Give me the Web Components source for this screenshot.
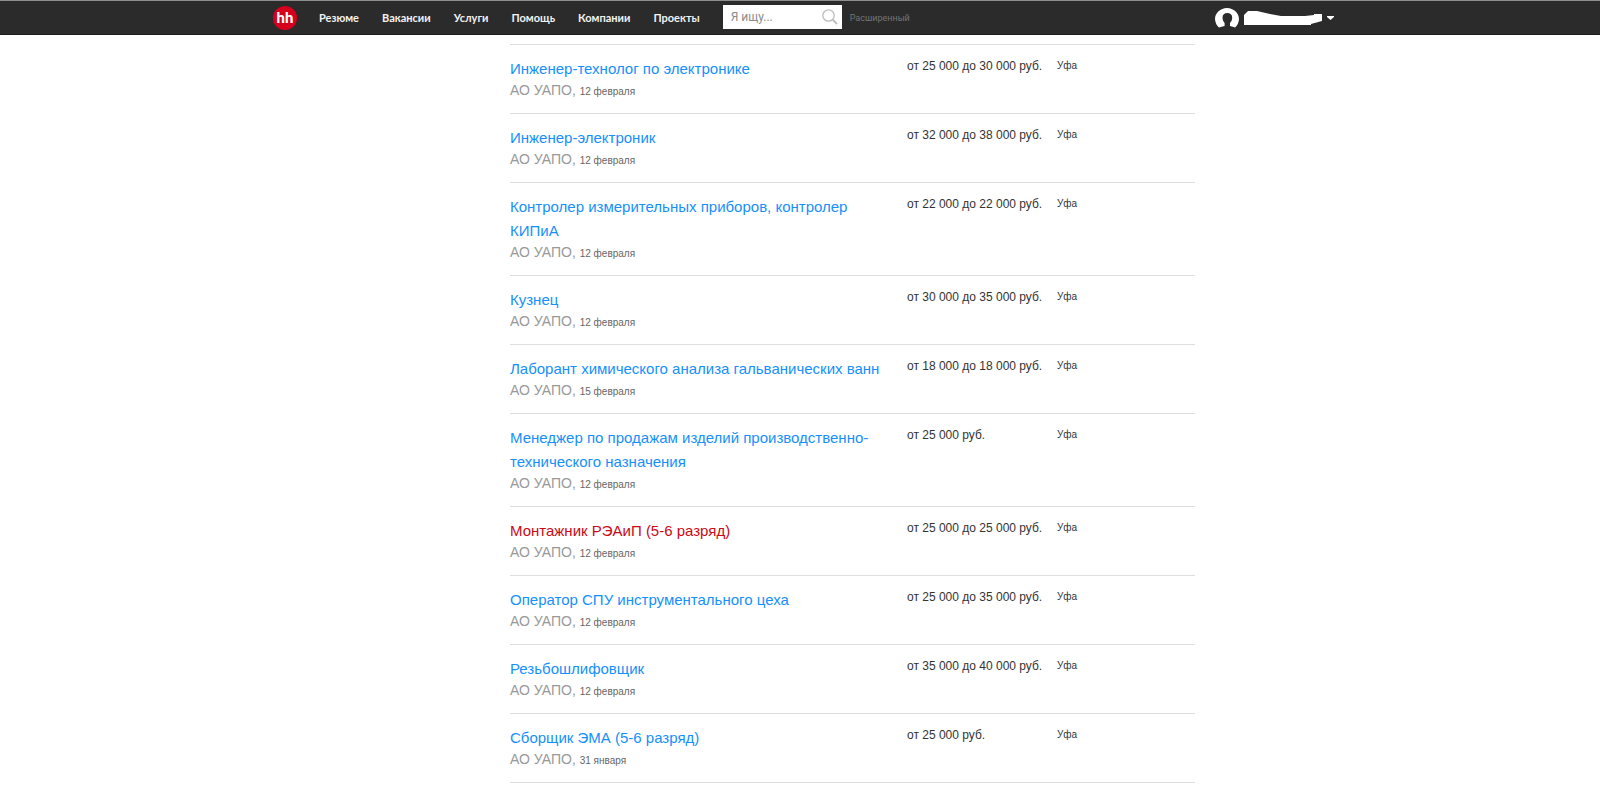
<!DOCTYPE html>
<html lang="ru">
<head>
<meta charset="utf-8">
<title>Вакансии</title>
<style>
body { margin: 0; background: #fff; font-family: "Liberation Sans", Arial, sans-serif; }
</style>
</head>
<body>
<hh-header></hh-header>
<vacancy-list>
  <vacancy-row salary="от 25 000 до 30 000 руб." date="12 февраля">Инженер-технолог по электронике</vacancy-row>
  <vacancy-row salary="от 32 000 до 38 000 руб." date="12 февраля">Инженер-электроник</vacancy-row>
  <vacancy-row salary="от 22 000 до 22 000 руб." date="12 февраля">Контролер измерительных приборов, контролер КИПиА</vacancy-row>
  <vacancy-row salary="от 30 000 до 35 000 руб." date="12 февраля">Кузнец</vacancy-row>
  <vacancy-row salary="от 18 000 до 18 000 руб." date="15 февраля">Лаборант химического анализа гальванических ванн</vacancy-row>
  <vacancy-row salary="от 25 000 руб." date="12 февраля">Менеджер по продажам изделий производственно-технического назначения</vacancy-row>
  <vacancy-row salary="от 25 000 до 25 000 руб." date="12 февраля" active>Монтажник РЭАиП (5-6 разряд)</vacancy-row>
  <vacancy-row salary="от 25 000 до 35 000 руб." date="12 февраля">Оператор СПУ инструментального цеха</vacancy-row>
  <vacancy-row salary="от 35 000 до 40 000 руб." date="12 февраля">Резьбошлифовщик</vacancy-row>
  <vacancy-row salary="от 25 000 руб." date="31 января">Сборщик ЭМА (5-6 разряд)</vacancy-row>
</vacancy-list>

<template id="header-tpl">
<style>
:host { display: block; box-sizing: border-box; height: 35px; background: #2b2b2b; border-top: 1px solid #8d8f8f; border-bottom: 1px solid #1c1c1c; font-family: Roboto, sans-serif; }
.bar { display: flex; align-items: center; box-sizing: border-box; height: 33px; max-width: 1068px; margin: 0 auto; padding-left: 7px; }
a { color: inherit; text-decoration: none; }
.logo { display: flex; align-items: center; justify-content: center; width: 24px; height: 24px; border-radius: 50%; background: #d6001c; color: #fff; font: bold 15px/24px Roboto, sans-serif; }
nav { display: flex; gap: 23px; margin-left: 22px; color: #f2f2f2; font: bold 11px/16px Lato, Roboto, sans-serif; }
form { display: flex; align-items: center; gap: 8px; margin-left: 23px; }
.search { display: flex; align-items: center; width: 119px; height: 24px; margin-bottom: 2px; background: #fff; }
input { flex: 1; min-width: 0; border: 0; outline: 0; padding: 0 0 0 8px; background: none; font: 12px/24px Roboto, sans-serif; }
input::placeholder { color: #8c8c8c; opacity: 1; }
button { border: 0; padding: 0; background: none; color: inherit; display: flex; align-items: center; }
.search button { width: 20px; height: 24px; }
.more { color: #747474; font-size: 9px; line-height: 16px; }
.user { margin-left: auto; gap: 5px; }
svg { display: block; }
</style>
<header class="bar">
  <a class="logo" href="#" aria-label="HeadHunter">hh</a>
  <nav><a href="#">Резюме</a><a href="#">Вакансии</a><a href="#">Услуги</a><a href="#">Помощь</a><a href="#">Компании</a><a href="#">Проекты</a></nav>
  <form>
    <div class="search">
      <input type="text" placeholder="Я ищу..." aria-label="Я ищу">
      <button type="button" aria-label="Найти"><svg width="16" height="16" viewBox="0 0 16 16" fill="none" stroke="#bdbdbd"><circle cx="6.5" cy="6.5" r="5.7" stroke-width="1.3"/><path d="M10.5 10.5 15 15" stroke-width="1.8"/></svg></button>
    </div>
    <a class="more" href="#">Расширенный</a>
  </form>
  <button class="user" type="button" aria-label="Профиль">
    <svg width="24" height="20" viewBox="0 0 24 20"><path fill="#fff" d="M4 19.500A12 12 0 0 1 0 11C0 5 5.400 0 12 0s12 5 12 11a12 12 0 0 1-4 8.500q-2-1-5-1.500v-3c1.500-1.500 2.200-3.500 2.200-5.500C17.200 6.500 15.200 5 12.300 5S7.500 6.500 7.500 9.500c0 2 .7 4 2.100 5.500v3q-3.100.5-5.600 1.500z"/></svg>
    <svg width="78" height="14" viewBox="0 0 78 14"><path fill="#fff" d="M0 4 4 0H13L26 3 37 5H61L70 4V3H78V10L67 13V14H0z"/></svg>
    <svg width="7" height="4" viewBox="0 0 7 4"><path fill="#fff" d="M0 0h7v1L3.500 4 0 1z"/></svg>
  </button>
</header>
</template>

<template id="list-tpl">
<style>
:host { display: block; max-width: 1062px; margin: 0 auto; }
.list { margin: 9px 136px 10px 241px; border-top: 1px solid #dedede; }
</style>
<main class="list"><slot></slot></main>
</template>

<template id="row-tpl">
<style>
:host { display: grid; grid-template-columns: 377px 130px 1fr; column-gap: 20px; padding: 12px 0; border-bottom: 1px solid #dedede; }
a { color: inherit; text-decoration: none; }
.title { display: block; color: #1590fc; font-size: 15px; line-height: 24px; }
:host([active]) .title { color: #cc0814; }
.meta { height: 20px; color: #999; font-size: 14px; line-height: 18px; white-space: nowrap; }
.date { color: #666; font-size: 10px; }
.salary { color: #333; font-size: 12px; line-height: 18px; white-space: nowrap; }
.city { color: #333; font-size: 10px; line-height: 18px; }
</style>
<div><a class="title" href="#"><slot></slot></a><div class="meta"><a href="#">АО УАПО</a>, <span class="date"></span></div></div>
<div class="salary"></div>
<div class="city">Уфа</div>
</template>

<script>
const stamp = (host, id) => {
  const root = host.attachShadow({ mode: "open" });
  root.append(document.getElementById(id).content.cloneNode(true));
  return root;
};
customElements.define("hh-header", class extends HTMLElement {
  constructor() { super(); stamp(this, "header-tpl"); }
});
customElements.define("vacancy-list", class extends HTMLElement {
  constructor() { super(); stamp(this, "list-tpl"); }
});
customElements.define("vacancy-row", class extends HTMLElement {
  constructor() {
    super();
    const root = stamp(this, "row-tpl");
    root.querySelector(".salary").textContent = this.getAttribute("salary");
    root.querySelector(".date").textContent = this.getAttribute("date");
  }
});
</script>
</body>
</html>
